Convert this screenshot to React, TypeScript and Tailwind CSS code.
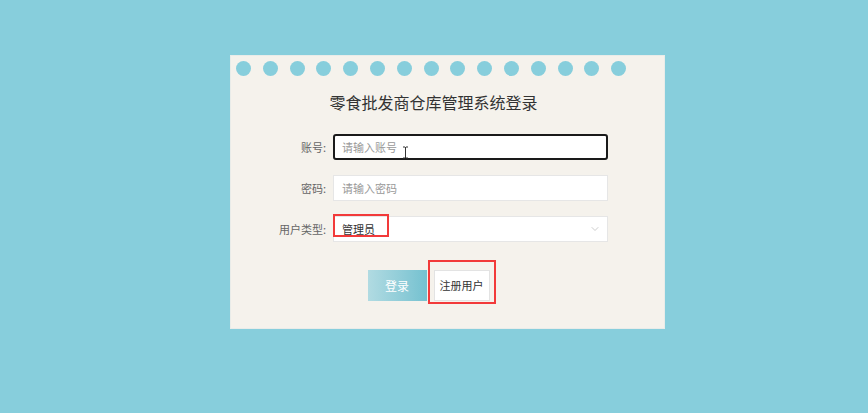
import { ChevronDown } from 'lucide-react'

const font = { fontFamily: '"Noto Sans CJK SC", "Noto Sans", sans-serif' }

export default function App() {
  return (
    <div className="w-[868px] h-[413px] bg-[#87cedc] overflow-hidden" style={font}>
      <div className="ml-[230px] mt-[55px] w-[435px] h-[274px] bg-[#f5f2ec] border border-[#e9ece9] pt-[5px]">
        {/* spiral holes */}
        <div className="flex gap-[11.8px] pl-[5px]">
          {Array.from({ length: 15 }).map((_, i) => (
            <span key={i} className="w-[15px] h-[15px] rounded-full bg-[#87cedc]" />
          ))}
        </div>

        <h1 className="mt-[14px] text-center text-[16px] leading-[24px] text-[#333] pr-[28px]">
          零食批发商仓库管理系统登录
        </h1>

        <div className="mt-[20px] flex flex-col gap-[15px]">
          <div className="flex items-center">
            <label className="w-[97px] text-right text-[11px] text-[#666] pr-[2px]">账号:</label>
            <div className="relative ml-[5px] w-[275px] h-[26px] bg-white border-2 border-[#1a1a1a] rounded-[3px] flex items-center pl-[7px]">
              <span className="text-[11px] text-[#999]">请输入账号</span>
              <svg className="absolute left-[67px] top-[10px]" width="7" height="13" viewBox="0 0 7 13">
                <path d="M1 1h2M4 1h2M3.5 1v11M1 12h2M4 12h2" stroke="#333" strokeWidth="1" fill="none" />
              </svg>
            </div>
          </div>

          <div className="flex items-center">
            <label className="w-[97px] text-right text-[11px] text-[#666] pr-[2px]">密码:</label>
            <div className="ml-[5px] w-[275px] h-[26px] bg-white border border-[#e6e6e6] flex items-center pl-[8px]">
              <span className="text-[11px] text-[#999]">请输入密码</span>
            </div>
          </div>

          <div className="flex items-center">
            <label className="w-[97px] text-right text-[11px] text-[#666] pr-[2px]">用户类型:</label>
            <div className="relative ml-[5px] w-[275px] h-[26px] bg-white border border-[#e6e6e6] flex items-center justify-between pl-[8px] pr-[6px]">
              <span className="text-[11px] text-[#333]">管理员</span>
              <ChevronDown className="w-[12px] h-[12px] text-[#bbb]" strokeWidth={1.5} />
              <span className="absolute left-[-1px] top-[-3px] w-[56px] h-[23px] border-2 border-[#f23a3a]" />
            </div>
          </div>
        </div>

        <div className="mt-[28px] flex justify-center gap-[7px] pr-[38px]">
          <button className="w-[59px] h-[31px] bg-gradient-to-r from-[#b1dbe2] to-[#74c1d0] text-white text-[12px]">
            登录
          </button>
          <div className="relative">
            <button className="w-[56px] h-[31px] bg-white border border-[#e3e3e3] text-[#333] text-[11px]">
              注册用户
            </button>
            <span className="absolute left-[-6px] top-[-10px] w-[68px] h-[44px] border-2 border-[#f23a3a]" />
          </div>
        </div>
      </div>
    </div>
  )
}
